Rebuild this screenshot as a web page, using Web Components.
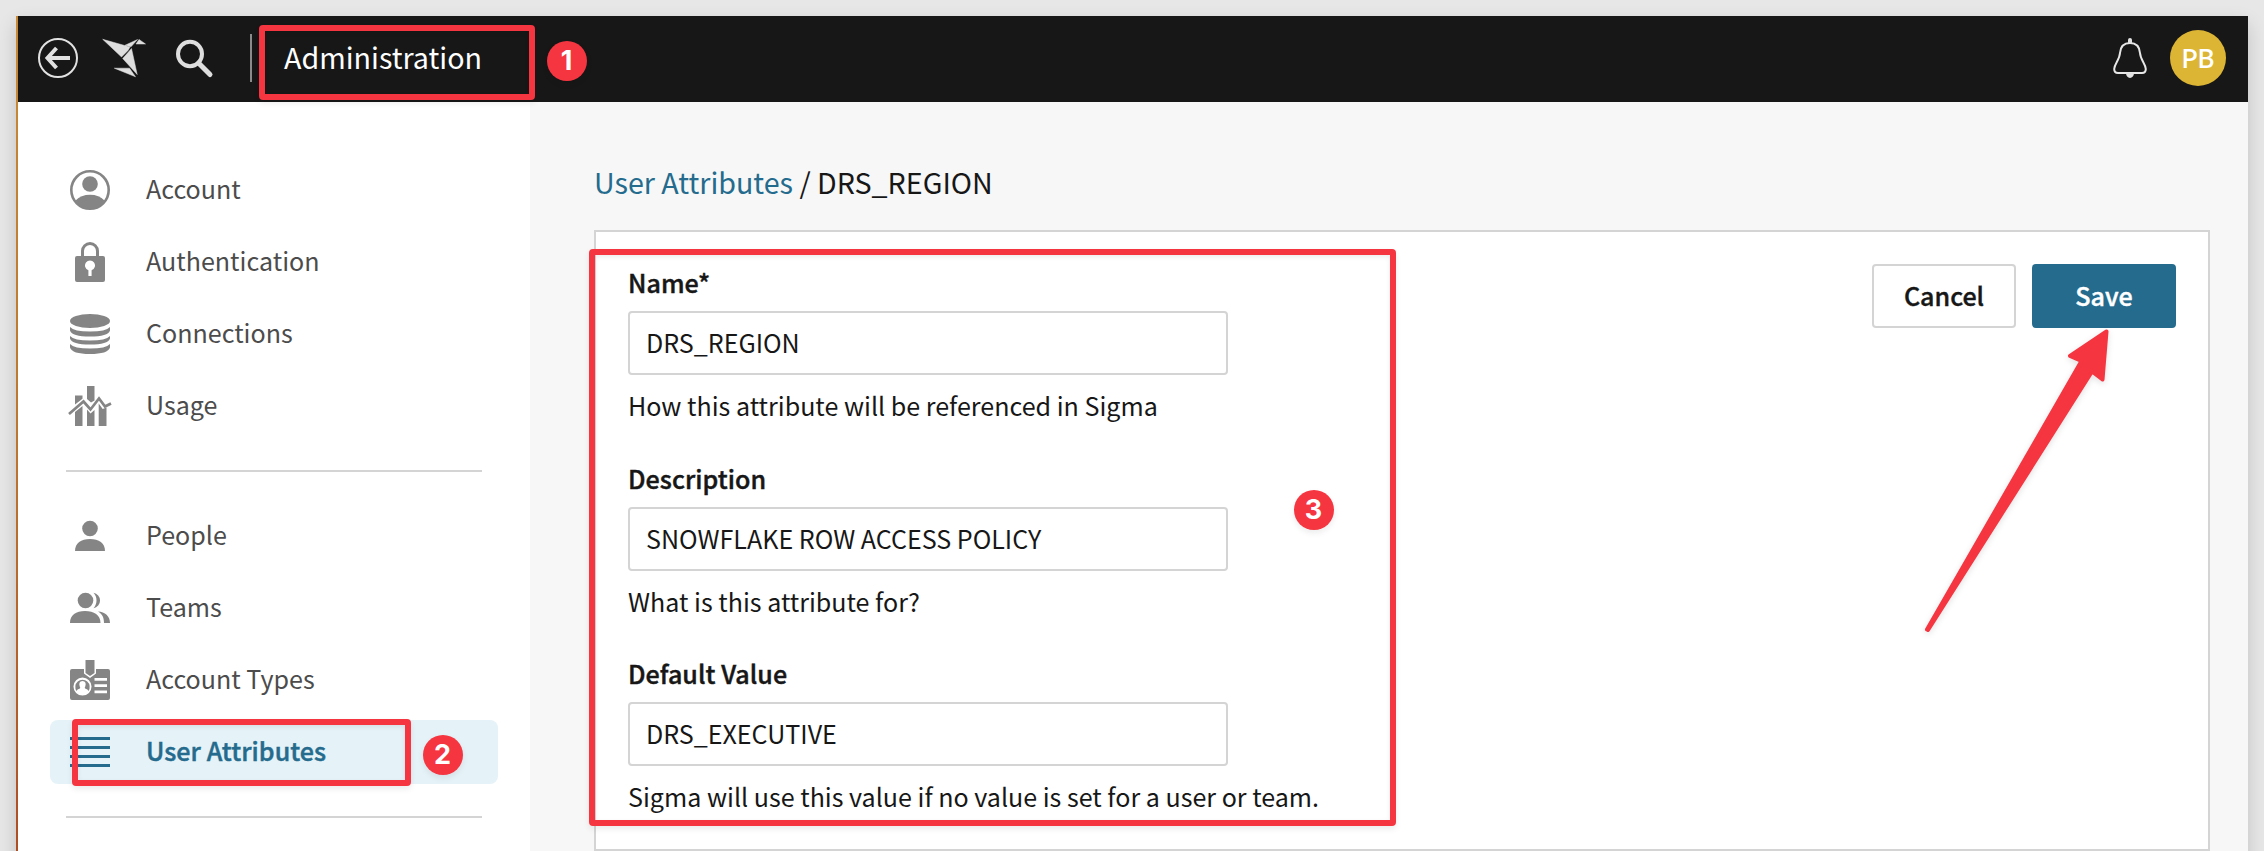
<!DOCTYPE html>
<html lang="en">
<head>
<meta charset="utf-8">
<title>Administration</title>
<style>
  html, body { margin: 0; height: 100%; overflow: hidden; }
  body {
    background: #e7e7e7; color: #171717;
    font-family: "Noto Sans CJK SC", "Source Sans Pro", sans-serif; font-size: 25.07px;
    --red: #f53540; --line: #d4d4d4; --blue: #246b8d;
  }
</style>
</head>
<body>
<admin-app></admin-app>
<script>
const define = (name, html) => customElements.define(name, class extends HTMLElement {
  constructor() {
    super();
    const t = document.createElement('template');
    t.innerHTML = typeof html === 'function' ? html(this) : html;
    this.attachShadow({ mode: 'open' }).append(t.content.cloneNode(true));
  }
});

const icons = {
  account: '<circle cx="20" cy="20" r="18.7" fill="none" stroke="currentColor" stroke-width="2.6"/><circle cx="20" cy="14" r="7.8"/><path d="M5.5 30.5Q11 24.8 20 24.8T34.5 30.5Q29.500 39 20 39T5.500 30.500Z"/>',
  lock: '<path fill-rule="evenodd" d="M7 14h4V9a9 9 0 0 1 18 0v5h4q2 0 2 2v22q0 2-2 2H7q-2 0-2-2V16q0-2 2-2Zm7 0h12V9a6 6 0 0 0-12 0ZM18.400 34h3.200v-5.700a5 5 0 1 0-3.200 0Z"/>',
  database: '<ellipse cx="20" cy="7" rx="20" ry="7"/><path d="M0 13q4 4.500 20 4.500T40 13v3.500q-2 6-20 6T0 16.500ZM0 22q4 4.500 20 4.500T40 22v2.500q-2 6-20 6T0 24.500ZM0 30q4 4.500 20 4.500T40 30v3.500q-2 6.500-20 6.500T0 33.500Z"/>',
  usage: '<path d="M5 9.500h7.500v3.200L5 18.500ZM17 0h7.500v14.500l-3.500 2-4-3.500ZM5 26l7.500-6v20H5ZM17 23.500l3.500 4 4-3.500v16H17ZM28.700 17.500l4 5.500 3.800-1.500V40h-7.800Z"/><path d="M-1 28 13.500 15.500 20.500 23.500 29 12.500 35 20.500 41 17.500" fill="none" stroke="currentColor" stroke-width="2.700"/>',
  person: '<circle cx="20" cy="12.500" r="7.800"/><path d="M5 35C5 27 11 23 20 23s15 4 15 12Z"/>',
  team: '<circle cx="15.500" cy="12.500" r="7.800"/><path d="M0 35C0 27 6 23 15 23s15.500 4 15.500 12ZM23.500 4.800a7.800 7.800 0 0 1 0 15.400c4-4 4-11.400 0-15.400ZM28 23.500C35 24 40 28 40 35h-6c0-5-1.500-9-6-11.500Z"/>',
  badge: '<path fill-rule="evenodd" d="M2 9h12v4.500l6 4.500 6-4.500V9h12q2 0 2 2v27q0 2-2 2H2q-2 0-2-2V11q0-2 2-2ZM12.500 17.500a9 9 0 1 0 0 18.100 9 9 0 0 0 0-18.100ZM24.500 18v2.800H37V18ZM24.500 24.300v2.800H37v-2.800ZM24.500 30.500v2.800H37v-2.800Z"/><path d="M15.500 0h9v13L20 16l-4.500-3Z"/><path d="M6.500 31a7.200 7.200 0 1 1 12 0q-.5-1.800-3.400-2.600-.8-.4 0-1.400 2-5.500-2.600-6-4.600.5-2.600 6 .8 1 0 1.400-2.900.8-3.400 2.600Z"/>',
  list: '<path d="M0 5h40v3H0ZM0 14h40v3H0ZM0 23h40v3H0ZM0 32h40v3H0Z"/>'
};

define('nav-item', el => `
  <style>
    :host { display: flex; align-items: center; height: 64px; margin: 0 32px 8px; padding-left: 20px; border-radius: 8px; color: #4c4c4c; }
    :host([active]) { background: #e5f2f8; color: var(--blue); font-weight: 500; -webkit-text-stroke: .45px currentColor; letter-spacing: .06px; }
    svg { width: 40px; height: 40px; margin-right: 36px; color: #858585; fill: currentColor; overflow: visible; }
    :host([active]) svg { color: var(--blue); }
    span { line-height: 40px; padding-bottom: 4px; white-space: nowrap; }
  </style>
  <svg viewBox="0 0 40 40">${icons[el.getAttribute('icon')]}</svg><span><slot></slot></span>`);

define('nav-rule', `<style>:host { display: block; height: 2px; background: var(--line); margin: 32px 48px; }</style>`);

define('side-nav', `
  <style>:host { display: block; box-sizing: border-box; width: 512px; flex: none; background: #fff; padding-top: 56px; }</style>
  <slot></slot>`);

define('top-bar', `
  <style>
    :host { display: flex; flex: none; align-items: center; box-sizing: border-box; height: 86px; background: #171717; color: #fff; padding: 0 22px 2px 20px; }
    svg { flex: none; overflow: visible; }
    .sep { width: 2px; height: 48px; background: #8b8b8b; margin: 0 32px 0 37px; }
    h1 { margin: 0; font-size: 28.65px; font-weight: 400; line-height: 40px; padding-bottom: 3px; }
    .avatar { display: grid; place-items: center; width: 56px; height: 56px; border-radius: 50%; background: #dcb534; font: 600 26px/56px Lato, sans-serif; margin-left: 23px; }
  </style>
  <svg width="40" height="40" viewBox="0 0 40 40" fill="none" stroke="#e1e1e1"><circle cx="20" cy="20" r="19" stroke-width="2"/><path d="M32 20H9.500M18.500 10 9.500 20l9 10" stroke-width="4"/></svg>
  <svg width="44" height="40" viewBox="0 0 44 40" style="margin-left:24px" fill="#dedede" stroke="#dedede" stroke-width=".5"><path d="M.7 1.300 28 9 26 12.500 19.500 19ZM23 7.300 35.500 1.500 29 8.800ZM37 1.400 43.500 6H34ZM29.500 10.500 35.200 36.500 20.700 20.500ZM12.300 30.200 27.500 30.200 33.500 38.800Z"/></svg>
  <svg width="37" height="37" viewBox="0 0 37 37" style="margin-left:30px" fill="none" stroke="#dedede"><ellipse cx="14" cy="14" rx="12" ry="12.200" stroke-width="4"/><path d="M22.500 23 34 34.500" stroke-width="5" stroke-linecap="round"/></svg>
  <div class="sep"></div>
  <h1><slot></slot></h1>
  <svg style="margin-left:auto" width="34" height="40" viewBox="0 0 34 40"><path d="M17 5C11 5 7.500 9 7 15 6.600 22 1.200 26 1.200 31c0 2.500 1.300 4 3.800 4h24c2.500 0 3.800-1.500 3.800-4 0-5-5.400-9-5.800-16-.5-6-4-10-10-10Z" fill="none" stroke="#e6e6e6" stroke-width="2"/><path d="M15 5V2a2 2 0 0 1 4 0v3ZM13 35h8a4 5 0 0 1-8 0Z" fill="#e1e1e1"/></svg>
  <div class="avatar">PB</div>`);

define('crumb-trail', `
  <style>:host { display: block; font-size: 28.65px; line-height: 40px; }
  ::slotted(a) { color: var(--blue); }</style><slot></slot>`);

define('form-field', el => `
  <style>
    :host { display: block; width: 800px; }
    .label, .help { line-height: 40px; white-space: nowrap; }
    .label { font-weight: 500; -webkit-text-stroke: .45px currentColor; letter-spacing: .05px; }
    .box { box-sizing: border-box; width: 600px; height: 64px; border: 2px solid var(--line); border-radius: 4px; padding: 9px 16px; line-height: 40px; margin: 9px 0 10px; background: #fff; }
  </style>
  <div class="label">${el.getAttribute('label')}</div>
  <div class="box"><slot></slot></div>
  <div class="help">${el.getAttribute('help')}</div>`);

define('push-button', `
  <style>
    :host { display: block; box-sizing: border-box; width: 144px; height: 64px; border: 2px solid var(--line); border-radius: 4px; background: #fff; text-align: center; line-height: 58px; font-weight: 500; -webkit-text-stroke: .4px currentColor; }
    :host([primary]) { background: var(--blue); border-color: var(--blue); color: #fff; }
  </style><slot></slot>`);

define('edit-panel', `
  <style>
    :host { display: flex; justify-content: space-between; align-items: flex-start; box-sizing: border-box; height: 621px; border: 2px solid var(--line); background: #fff; padding: 30px 32px 0; }
    .fields { display: flex; flex-direction: column; gap: 32.5px; }
    .actions { display: flex; gap: 16px; padding-top: 2px; }
  </style>
  <div class="fields"><slot></slot></div>
  <div class="actions"><slot name="actions"></slot></div>`);

define('mark-frame', `<style>:host { position: absolute; box-sizing: border-box; border: 6px solid var(--red); border-radius: 4px; box-shadow: 0 3px 6px rgba(0,0,0,.08), inset 0 2px 5px rgba(0,0,0,.08); }</style>`);
define('mark-number', `<style>:host { position: absolute; width: 40px; height: 40px; border-radius: 50%; background: var(--red); color: #fff; font: 700 27px/40px Inter, sans-serif; text-align: center; box-shadow: 0 3px 6px rgba(0,0,0,.08); }</style><slot></slot>`);
define('mark-arrow', `<style>:host { position: absolute; left: 1920px; top: 324px; filter: drop-shadow(0 2px 3px rgba(0,0,0,.12)); } svg { display: block; }</style>
  <svg width="196" height="312" fill="#f53540" stroke="#f53540" stroke-width="4" stroke-linejoin="round"><path d="M186.500 7.500 150 32 161.500 37 7 305.500 8 306 172 47.500 182.500 55.500Z"/></svg>`);

define('admin-app', `
  <style>
    :host { display: block; position: relative; width: 2264px; height: 851px; overflow: hidden; }
    .window { box-sizing: border-box; margin: 16px 16px 0; width: 2232px; height: 860px; background: #f7f7f7; box-shadow: 0 8px 18px rgba(0,0,0,.16); display: flex; }
    .edge { width: 2px; flex: none; background: linear-gradient(#c88a35, #bd7630 50%, #ad4c25); }
    .content { flex: 1; display: flex; flex-direction: column; }
    .body { flex: 1; display: flex; }
    main { flex: 1; padding: 60px 38px 0 64px; }
    crumb-trail { margin-bottom: 28px; }
  </style>
  <div class="window">
    <div class="edge"></div>
    <div class="content">
      <top-bar>Administration</top-bar>
      <div class="body">
        <side-nav>
          <nav-item icon="account">Account</nav-item>
          <nav-item icon="lock">Authentication</nav-item>
          <nav-item icon="database">Connections</nav-item>
          <nav-item icon="usage">Usage</nav-item>
          <nav-rule></nav-rule>
          <nav-item icon="person">People</nav-item>
          <nav-item icon="team">Teams</nav-item>
          <nav-item icon="badge">Account Types</nav-item>
          <nav-item icon="list" active>User Attributes</nav-item>
          <nav-rule></nav-rule>
        </side-nav>
        <main>
          <crumb-trail><a>User Attributes</a> / DRS_REGION</crumb-trail>
          <edit-panel>
            <form-field label="Name*" help="How this attribute will be referenced in Sigma">DRS_REGION</form-field>
            <form-field label="Description" help="What is this attribute for?">SNOWFLAKE ROW ACCESS POLICY</form-field>
            <form-field label="Default Value" help="Sigma will use this value if no value is set for a user or team.">DRS_EXECUTIVE</form-field>
            <push-button slot="actions">Cancel</push-button>
            <push-button slot="actions" primary>Save</push-button>
          </edit-panel>
        </main>
      </div>
    </div>
  </div>
  <mark-frame style="left:259px;top:25px;width:276px;height:75px"></mark-frame>
  <mark-frame style="left:72px;top:719px;width:339px;height:67px"></mark-frame>
  <mark-frame style="left:589px;top:249px;width:807px;height:577px"></mark-frame>
  <mark-number style="left:546.5px;top:41px">1</mark-number>
  <mark-number style="left:422.5px;top:735px">2</mark-number>
  <mark-number style="left:1293.500px;top:490px">3</mark-number>
  <mark-arrow></mark-arrow>`);
</script>
</body>
</html>
